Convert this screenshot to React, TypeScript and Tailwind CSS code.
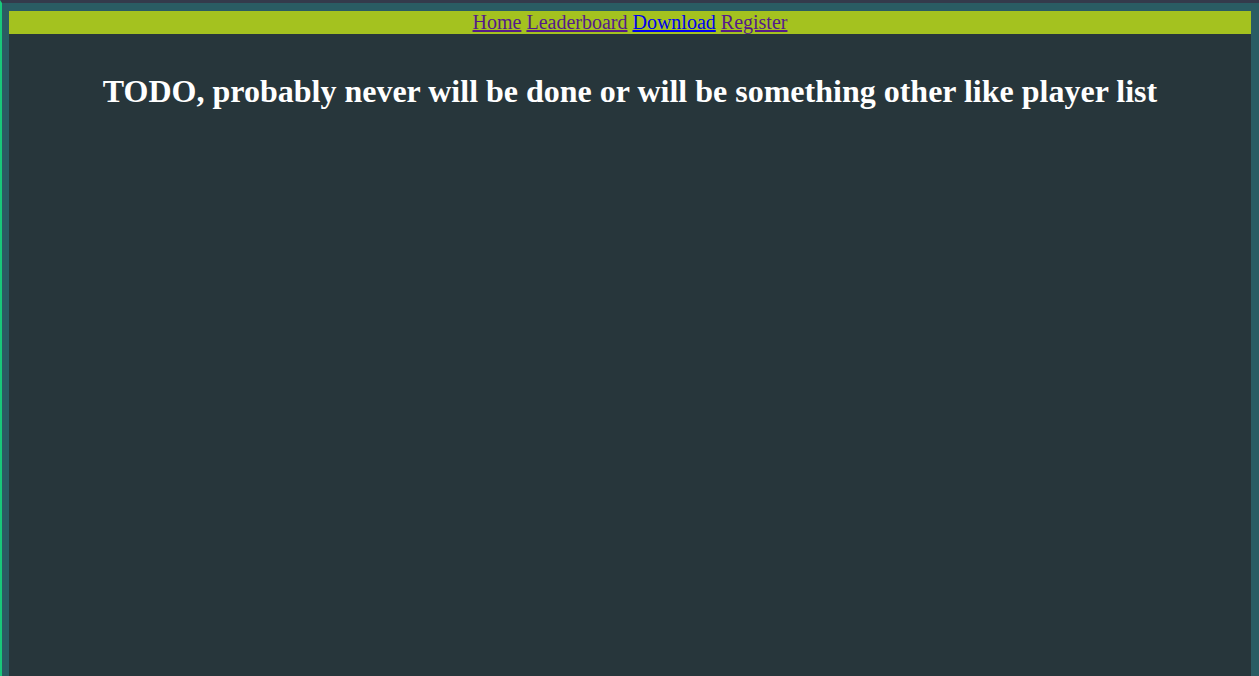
import React from 'react';

const links = [
  { label: 'Home', color: 'text-[#551a8b]' },
  { label: 'Leaderboard', color: 'text-[#551a8b]' },
  { label: 'Download', color: 'text-[#0000ee]' },
  { label: 'Register', color: 'text-[#551a8b]' },
];

const App: React.FC = () => {
  return (
    <div
      className="min-h-screen flex flex-col bg-[#2a5c63] border-t-[3px] border-t-[#343a4b] border-l-2 border-l-[#19c97a] pt-[8px] pl-[7px] pr-[8px]"
      style={{ fontFamily: '"Liberation Serif", "Times New Roman", serif' }}
    >
      <div className="flex-1 flex flex-col bg-[#27363b]">
        {/* Nav */}
        <nav className="h-[23px] bg-[#a4c21f] flex justify-center items-center text-[20px] leading-[23px] gap-[5px]">
          {links.map((l) => (
            <a key={l.label} href="#" className={`${l.color} underline`}>
              {l.label}
            </a>
          ))}
        </nav>

        {/* Content */}
        <h1 className="mt-[39px] text-center text-white font-bold text-[32px] leading-[36px]">
          TODO, probably never will be done or will be something other like player list
        </h1>
      </div>
    </div>
  );
};

export default App;
